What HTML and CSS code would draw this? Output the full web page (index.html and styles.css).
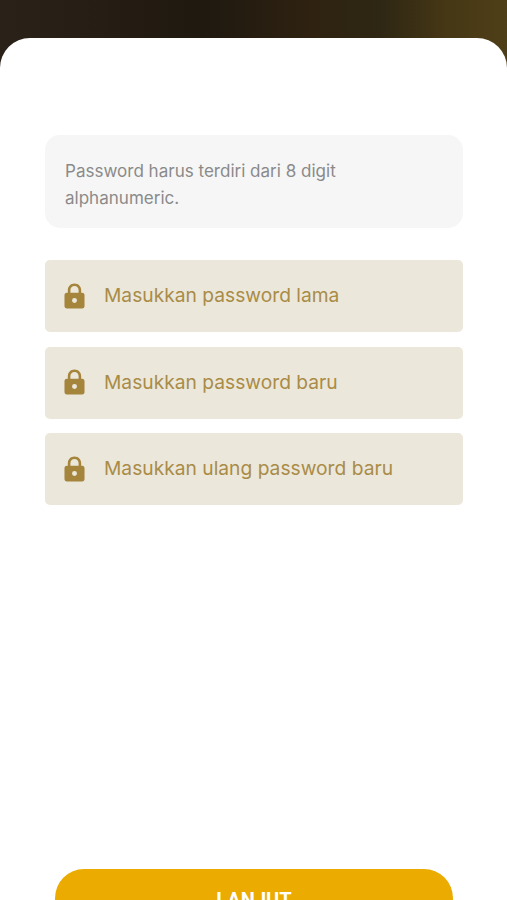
FILE: index.html
```html
<!DOCTYPE html>
<html lang="id">
<head>
<meta charset="utf-8">
<title>Ubah Password</title>
<link rel="stylesheet" href="styles.css">
</head>
<body>
<div class="page">
  <div class="sheet">
    <div class="note">Password harus terdiri dari 8 digit alphanumeric.</div>
    <div class="fields">
      <div class="field">
        <svg class="lock" viewBox="0 0 22 27"><path fill-rule="evenodd" d="M11 0.5C6.9 0.5 4 3.5 4 7.5V10H3C1.3 10 0.5 11 0.5 12.6V24C0.5 25.7 1.4 26.6 3 26.6H19C20.6 26.6 21.5 25.7 21.5 24V12.6C21.5 11 20.7 10 19 10H18V7.5C18 3.5 15.1 0.5 11 0.5ZM11 3C13.6 3 15.3 4.9 15.3 7.6V10H6.7V7.6C6.7 4.9 8.4 3 11 3ZM11 15.6A2.6 2.6 0 1 1 11 20.8A2.6 2.6 0 1 1 11 15.6Z"/></svg>
        <span class="label">Masukkan password lama</span>
      </div>
      <div class="field">
        <svg class="lock" viewBox="0 0 22 27"><path fill-rule="evenodd" d="M11 0.5C6.9 0.5 4 3.5 4 7.5V10H3C1.3 10 0.5 11 0.5 12.6V24C0.5 25.7 1.4 26.6 3 26.6H19C20.6 26.6 21.5 25.7 21.5 24V12.6C21.5 11 20.7 10 19 10H18V7.5C18 3.5 15.1 0.5 11 0.5ZM11 3C13.6 3 15.3 4.9 15.3 7.6V10H6.7V7.6C6.7 4.9 8.4 3 11 3ZM11 15.6A2.6 2.6 0 1 1 11 20.8A2.6 2.6 0 1 1 11 15.6Z"/></svg>
        <span class="label">Masukkan password baru</span>
      </div>
      <div class="field">
        <svg class="lock" viewBox="0 0 22 27"><path fill-rule="evenodd" d="M11 0.5C6.9 0.5 4 3.5 4 7.5V10H3C1.3 10 0.5 11 0.5 12.6V24C0.5 25.7 1.4 26.6 3 26.6H19C20.6 26.6 21.5 25.7 21.5 24V12.6C21.5 11 20.7 10 19 10H18V7.5C18 3.5 15.1 0.5 11 0.5ZM11 3C13.6 3 15.3 4.9 15.3 7.6V10H6.7V7.6C6.7 4.9 8.4 3 11 3ZM11 15.6A2.6 2.6 0 1 1 11 20.8A2.6 2.6 0 1 1 11 15.6Z"/></svg>
        <span class="label">Masukkan ulang password baru</span>
      </div>
    </div>
    <div class="action">LANJUT</div>
  </div>
</div>
</body>
</html>
```
FILE: styles.css
```css
html, body {
  margin: 0;
  padding: 0;
  height: 100%;
  overflow: hidden;
}
.page {
  height: 900px;
  padding-top: 38px;
  box-sizing: border-box;
  overflow: hidden;
  background: linear-gradient(90deg, #2a2119 0%, #261d14 20%, #1f1910 40%, #2f2211 62%, #2e2714 75%, #463715 88%, #4f3f18 100%);
  font-family: Inter, "Noto Sans", sans-serif;
}
.sheet {
  background: #fff;
  border-radius: 30px 30px 0 0;
  height: 900px;
  box-sizing: border-box;
  padding: 97px 44px 0 45px;
}
.note {
  background: #f6f6f6;
  border-radius: 15px;
  height: 93px;
  box-sizing: border-box;
  padding: 22px 90px 0 20px;
  font-size: 17.05px;
  line-height: 27px;
  color: #8a8a8a;
}
.fields {
  margin-top: 32px;
  display: flex;
  flex-direction: column;
  gap: 14.5px;
}
.field {
  height: 72px;
  background: #ece7db;
  border-radius: 5px;
  display: flex;
  align-items: center;
  padding-left: 19px;
  gap: 19px;
  color: #a98c47;
  font-size: 19.23px;
}
.label {
  margin-bottom: 2px;
}
.lock {
  width: 21px;
  height: 26px;
  fill: #a5843c;
  flex: none;
  margin-bottom: 1px;
}
.action {
  margin: 364px 10px 0;
  height: 58px;
  background: #ebab00;
  border-radius: 29px;
  color: #fff;
  font-weight: 700;
  font-size: 20px;
  text-align: center;
  line-height: 62px;
  font-family: Roboto, sans-serif;
}
```
